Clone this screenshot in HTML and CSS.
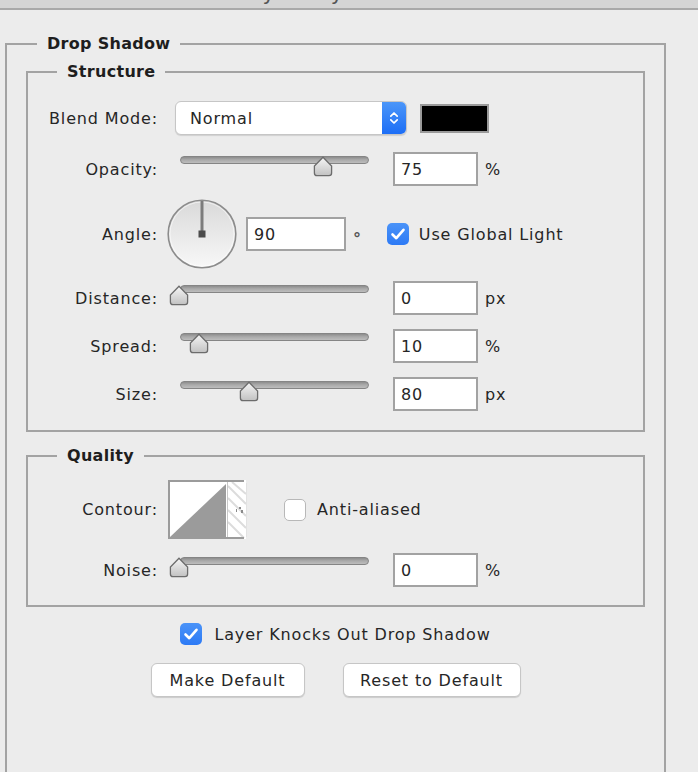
FILE: index.html
```html
<!DOCTYPE html>
<html>
<head>
<meta charset="utf-8">
<title>Layer Style - Drop Shadow</title>
<link rel="stylesheet" href="styles.css">
</head>
<body>
<div class="titlebar"><span class="title">Layer Style</span></div>

<fieldset class="group outer">
  <legend>Drop Shadow</legend>
  <div class="outer-body">

    <fieldset class="group inner">
      <legend>Structure</legend>
      <div class="inner-body structure-body">

        <div class="row">
          <span class="label">Blend Mode:</span>
          <div class="select">
            <span class="select-text">Normal</span>
            <span class="stepper">
              <svg width="10" height="16" viewBox="0 0 10 16"><polyline points="1.8,6.2 5,3 8.2,6.2" fill="none" stroke="#fff" stroke-width="1.7" stroke-linecap="round" stroke-linejoin="round"/><polyline points="1.8,9.8 5,13 8.2,9.8" fill="none" stroke="#fff" stroke-width="1.7" stroke-linecap="round" stroke-linejoin="round"/></svg>
            </span>
          </div>
          <span class="swatch"></span>
        </div>

        <div class="row gap17">
          <span class="label">Opacity:</span>
          <div class="slider">
            <div class="track"></div>
            <svg class="thumb" style="left:133px" width="20" height="21" viewBox="0 0 20 21"><defs><linearGradient id="tg1" x1="0" y1="0" x2="0" y2="1"><stop offset="0" stop-color="#f6f6f6"/><stop offset="1" stop-color="#c2c2c2"/></linearGradient></defs><path d="M10 1.2 L18.6 10 V17 Q18.6 19.6 16 19.6 H4 Q1.4 19.6 1.4 17 V10 Z" fill="url(#tg1)" stroke="#6c6c6c" stroke-width="1.3"/></svg>
          </div>
          <div class="field">75</div>
          <span class="unit">%</span>
        </div>

        <div class="row angle-row gap13">
          <span class="label">Angle:</span>
          <svg class="dial" width="70" height="70" viewBox="0 0 70 70"><defs><linearGradient id="dg" x1="0" y1="0" x2="0" y2="1"><stop offset="0" stop-color="#d9d9d9"/><stop offset="1" stop-color="#f8f8f8"/></linearGradient></defs><circle cx="35" cy="35" r="33.8" fill="url(#dg)" stroke="#8c8c8c" stroke-width="1.6"/><circle cx="35" cy="35" r="32" fill="none" stroke="#ffffff" stroke-opacity="0.55" stroke-width="1"/><line x1="35" y1="35" x2="35" y2="2" stroke="#7c7c7c" stroke-width="3"/><rect x="31.5" y="31.5" width="7" height="7" fill="#4b4b4b"/></svg>
          <div class="field wide">90</div>
          <span class="deg">°</span>
          <span class="check on"><svg width="22" height="22" viewBox="0 0 22 22"><polyline points="5.5,11.5 9.3,15.2 16.5,6.8" fill="none" stroke="#fff" stroke-width="2.6" stroke-linecap="round" stroke-linejoin="round"/></svg></span>
          <span class="check-label">Use Global Light</span>
        </div>

        <div class="row gap12">
          <span class="label">Distance:</span>
          <div class="slider">
            <div class="track"></div>
            <svg class="thumb" style="left:-11px" width="20" height="21" viewBox="0 0 20 21"><defs><linearGradient id="tg2" x1="0" y1="0" x2="0" y2="1"><stop offset="0" stop-color="#f6f6f6"/><stop offset="1" stop-color="#c2c2c2"/></linearGradient></defs><path d="M10 1.2 L18.6 10 V17 Q18.6 19.6 16 19.6 H4 Q1.4 19.6 1.4 17 V10 Z" fill="url(#tg2)" stroke="#6c6c6c" stroke-width="1.3"/></svg>
          </div>
          <div class="field">0</div>
          <span class="unit">px</span>
        </div>

        <div class="row gap14">
          <span class="label">Spread:</span>
          <div class="slider">
            <div class="track"></div>
            <svg class="thumb" style="left:9px" width="20" height="21" viewBox="0 0 20 21"><defs><linearGradient id="tg3" x1="0" y1="0" x2="0" y2="1"><stop offset="0" stop-color="#f6f6f6"/><stop offset="1" stop-color="#c2c2c2"/></linearGradient></defs><path d="M10 1.2 L18.6 10 V17 Q18.6 19.6 16 19.6 H4 Q1.4 19.6 1.4 17 V10 Z" fill="url(#tg3)" stroke="#6c6c6c" stroke-width="1.3"/></svg>
          </div>
          <div class="field">10</div>
          <span class="unit">%</span>
        </div>

        <div class="row gap14">
          <span class="label">Size:</span>
          <div class="slider">
            <div class="track"></div>
            <svg class="thumb" style="left:59px" width="20" height="21" viewBox="0 0 20 21"><defs><linearGradient id="tg4" x1="0" y1="0" x2="0" y2="1"><stop offset="0" stop-color="#f6f6f6"/><stop offset="1" stop-color="#c2c2c2"/></linearGradient></defs><path d="M10 1.2 L18.6 10 V17 Q18.6 19.6 16 19.6 H4 Q1.4 19.6 1.4 17 V10 Z" fill="url(#tg4)" stroke="#6c6c6c" stroke-width="1.3"/></svg>
          </div>
          <div class="field">80</div>
          <span class="unit">px</span>
        </div>

      </div>
    </fieldset>

    <fieldset class="group inner quality">
      <legend>Quality</legend>
      <div class="inner-body quality-body">

        <div class="row contour-row">
          <span class="label">Contour:</span>
          <svg class="contour" width="80" height="59" viewBox="0 0 80 59">
            <rect x="0" y="0" width="78" height="59" fill="#fff"/>
            <g stroke="#dcdcdc" stroke-width="2">
              <line x1="60" y1="6" x2="78" y2="24"/>
              <line x1="60" y1="18" x2="78" y2="36"/>
              <line x1="60" y1="30" x2="78" y2="48"/>
              <line x1="60" y1="42" x2="76" y2="58"/>
              <line x1="64" y1="2" x2="78" y2="14"/>
            </g>
            <g fill="#8a8a8a"><rect x="71" y="27" width="2" height="2"/><rect x="73" y="30" width="2" height="3"/><rect x="68" y="29" width="1" height="3"/></g>
            <polygon points="2,57 58,4 58,57" fill="#9b9b9b"/>
            <line x1="59.5" y1="2" x2="59.5" y2="57" stroke="#c8c8c8" stroke-width="1"/>
            <line x1="1" y1="0" x2="1" y2="59" stroke="#9b9b9b" stroke-width="2"/>
            <line x1="0" y1="1" x2="76" y2="1" stroke="#9b9b9b" stroke-width="2"/>
            <line x1="0" y1="58" x2="76" y2="58" stroke="#9b9b9b" stroke-width="2"/>
            <line x1="78.5" y1="3" x2="78.5" y2="57" stroke="#e2e2e2" stroke-width="1"/>
          </svg>
          <span class="check off"></span>
          <span class="check-label">Anti-aliased</span>
        </div>

        <div class="row gap14">
          <span class="label">Noise:</span>
          <div class="slider">
            <div class="track"></div>
            <svg class="thumb" style="left:-11px" width="20" height="21" viewBox="0 0 20 21"><defs><linearGradient id="tg5" x1="0" y1="0" x2="0" y2="1"><stop offset="0" stop-color="#f6f6f6"/><stop offset="1" stop-color="#c2c2c2"/></linearGradient></defs><path d="M10 1.2 L18.6 10 V17 Q18.6 19.6 16 19.6 H4 Q1.4 19.6 1.4 17 V10 Z" fill="url(#tg5)" stroke="#6c6c6c" stroke-width="1.3"/></svg>
          </div>
          <div class="field">0</div>
          <span class="unit">%</span>
        </div>

      </div>
    </fieldset>

    <div class="knock">
      <span class="check on"><svg width="22" height="22" viewBox="0 0 22 22"><polyline points="5.5,11.5 9.3,15.2 16.5,6.8" fill="none" stroke="#fff" stroke-width="2.6" stroke-linecap="round" stroke-linejoin="round"/></svg></span>
      <span class="knock-label">Layer Knocks Out Drop Shadow</span>
    </div>

    <div class="buttons">
      <button class="btn btn-make">Make Default</button>
      <button class="btn btn-reset">Reset to Default</button>
    </div>

  </div>
</fieldset>
</body>
</html>
```

FILE: styles.css
```css
html, body {
  margin: 0;
  padding: 0;
}

body {
  background: #ececec;
  font-family: "DejaVu Sans", "Liberation Sans", sans-serif;
  font-size: 16px;
  letter-spacing: 0.85px;
  color: #262626;
  height: 772px;
  overflow: hidden;
}

.titlebar {
  height: 8px;
  background: #d5d5d5;
  border-bottom: 2px solid #a9a9a9;
  overflow: hidden;
}

.title {
  display: block;
  font-size: 21px;
  line-height: 20px;
  margin-top: -17px;
  padding-left: 236px;
  color: #555;
  letter-spacing: 1px;
}

.group {
  margin: 0;
  padding: 0;
  min-width: 0;
  border: 2px solid #a3a3a3;
}

.group > legend {
  font-weight: bold;
  line-height: 20px;
  padding: 0 10px;
  letter-spacing: 0.3px;
  color: #1e1e1e;
}

.outer {
  margin: 24px 0 0 5px;
  width: 661px;
  box-sizing: border-box;
  height: 738px;
  border-bottom: none;
}

.outer > legend {
  margin-left: 30px;
}

.outer-body {
  padding: 0 19px;
}

.inner {
  margin-top: 8px;
}

.inner > legend {
  margin-left: 29px;
}

.quality {
  margin-top: 14px;
}

.structure-body {
  padding: 19px 0 19px;
}

.quality-body {
  padding: 14px 0 18px;
}

.row {
  display: flex;
  align-items: center;
  height: 34px;
}

.gap12 { margin-top: 12px; }
.gap13 { margin-top: 13px; }
.gap14 { margin-top: 14px; }
.gap17 { margin-top: 17px; }

.label {
  flex: none;
  width: 130px;
  text-align: right;
}

/* select */
.select {
  flex: none;
  margin-left: 17px;
  width: 232px;
  height: 34px;
  box-sizing: border-box;
  border: 1px solid #c6c6c6;
  border-radius: 6px;
  background: #fff;
  display: flex;
  align-items: stretch;
  overflow: hidden;
  box-shadow: 0 1px 1px rgba(0, 0, 0, 0.12);
}

.select-text {
  flex: 1;
  display: flex;
  align-items: center;
  padding-left: 14px;
}

.stepper {
  flex: none;
  width: 24px;
  background: linear-gradient(#4b96f9, #1d6ef6);
  display: flex;
  align-items: center;
  justify-content: center;
}

.swatch {
  flex: none;
  margin-left: 13px;
  width: 69px;
  height: 29px;
  box-sizing: border-box;
  border: 2px solid #9a9a9a;
  background: #000;
}

/* sliders */
.slider {
  flex: none;
  position: relative;
  width: 189px;
  height: 34px;
  margin-left: 22px;
}

.track {
  margin-top: 4px;
  height: 8px;
  box-sizing: border-box;
  border: 1px solid #858585;
  border-radius: 4px;
  background: linear-gradient(#8d8d8d, #a9a9a9 45%, #bdbdbd);
}

.thumb {
  position: absolute;
  top: 4px;
}

.field {
  flex: none;
  margin-left: 24px;
  width: 85px;
  height: 34px;
  box-sizing: border-box;
  border: 2px solid #a2a2a2;
  background: #fff;
  padding-left: 6px;
  display: flex;
  align-items: center;
}

.unit {
  margin-left: 7px;
}

/* angle */
.angle-row {
  height: 70px;
}

.dial {
  flex: none;
  margin-left: 9px;
}

.field.wide {
  width: 100px;
  margin-left: 9px;
}

.deg {
  margin-left: 7px;
  padding-top: 9px;
  font-size: 16px;
  font-weight: bold;
  color: #555;
}

.check {
  flex: none;
  width: 22px;
  height: 22px;
  box-sizing: border-box;
  border-radius: 5px;
  display: flex;
  align-items: center;
  justify-content: center;
}

.check.on {
  background: linear-gradient(#4a93f8, #2d7af5);
}

.angle-row .check {
  margin-left: 25px;
}

.check.off {
  background: #fff;
  border: 1px solid #b8b8b8;
  margin-left: 36px;
}

.check-label {
  margin-left: 10px;
}

.contour-row .check-label {
  margin-left: 11px;
}

/* quality */
.contour-row {
  height: 59px;
}

.contour {
  flex: none;
  margin-left: 10px;
}

/* bottom */
.knock {
  display: flex;
  align-items: center;
  justify-content: center;
  height: 24px;
  margin-top: 15px;
}

.knock-label {
  margin-left: 12px;
}

.buttons {
  display: flex;
  justify-content: center;
  gap: 38px;
  margin-top: 17px;
}

.btn {
  height: 34px;
  box-sizing: border-box;
  border: 1px solid #c6c6c6;
  border-radius: 6px;
  background: #fff;
  box-shadow: 0 1px 1px rgba(0, 0, 0, 0.14);
  font-family: "DejaVu Sans", "Liberation Sans", sans-serif;
  font-size: 16px;
  letter-spacing: 0.85px;
  color: #262626;
  padding: 0;
}

.btn-make {
  width: 154px;
}

.btn-reset {
  width: 178px;
}
```
